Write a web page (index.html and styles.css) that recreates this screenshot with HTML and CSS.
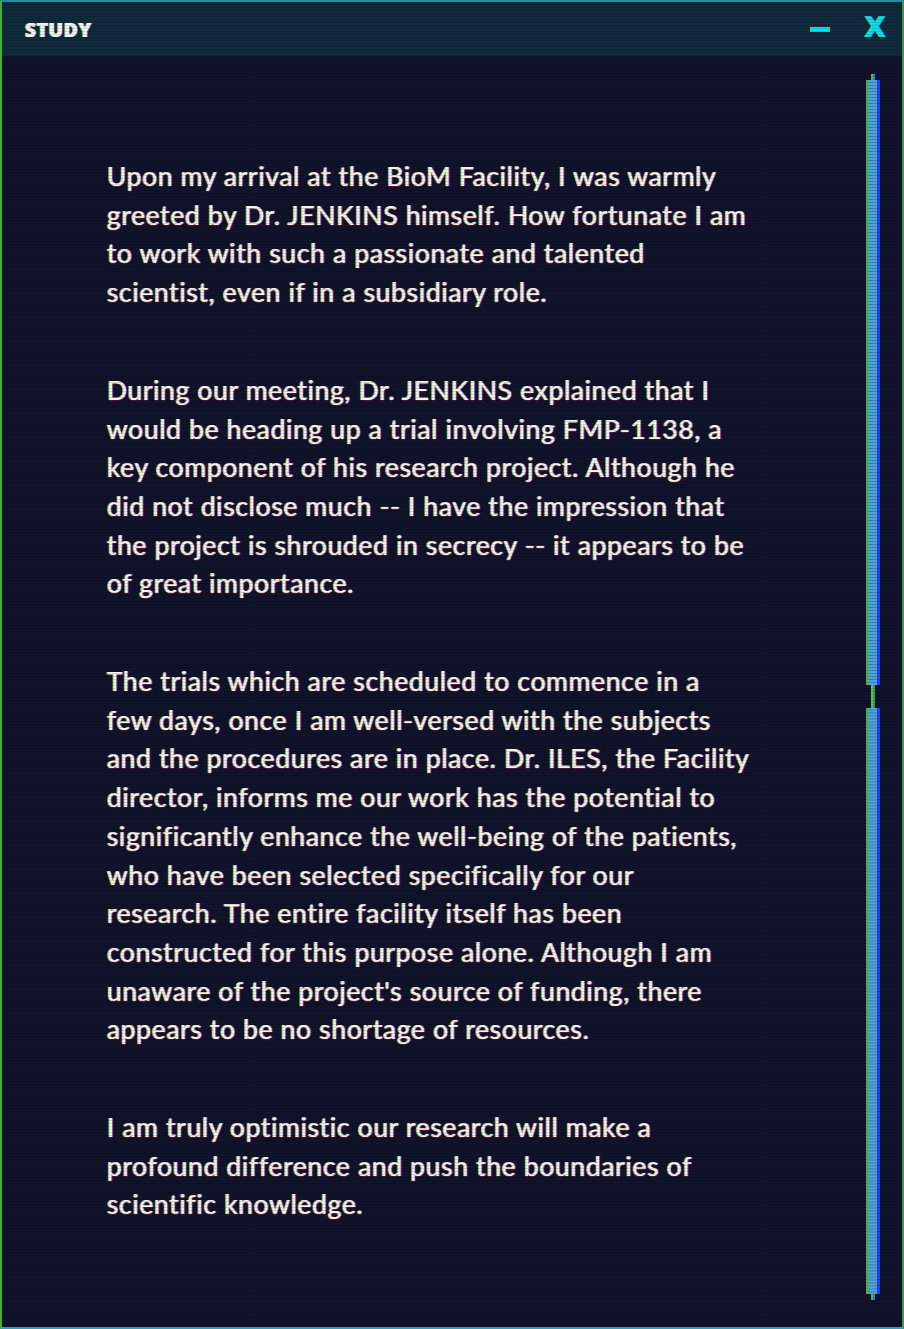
FILE: index.html
```html
<!DOCTYPE html>
<html>
<head>
<meta charset="utf-8">
<link rel="stylesheet" href="styles.css">
</head>
<body>
<div class="window">
  <header class="titlebar">
    <span class="title">STUDY</span>
    <div class="controls">
      <span class="minimize"></span>
      <span class="close">X</span>
    </div>
  </header>
  <div class="body">
    <article class="content">
      <p>Upon my arrival at the BioM Facility, I was warmly<br>greeted by Dr. JENKINS himself. How fortunate I am<br>to work with such a passionate and talented<br>scientist, even if in a subsidiary role.</p>
      <p>During our meeting, Dr. JENKINS explained that I<br>would be heading up a trial involving FMP-1138, a<br>key component of his research project. Although he<br>did not disclose much -- I have the impression that<br>the project is shrouded in secrecy -- it appears to be<br>of great importance.</p>
      <p>The trials which are scheduled to commence in a<br>few days, once I am well-versed with the subjects<br>and the procedures are in place. Dr. ILES, the Facility<br>director, informs me our work has the potential to<br>significantly enhance the well-being of the patients,<br>who have been selected specifically for our<br>research. The entire facility itself has been<br>constructed for this purpose alone. Although I am<br>unaware of the project's source of funding, there<br>appears to be no shortage of resources.</p>
      <p>I am truly optimistic our research will make a<br>profound difference and push the boundaries of<br>scientific knowledge.</p>
    </article>
    <div class="scrollbar">
      <span class="cap"></span>
      <span class="seg seg-top"></span>
      <span class="link"></span>
      <span class="seg seg-bottom"></span>
      <span class="cap"></span>
    </div>
  </div>
  <div class="scanlines"></div>
</div>
</body>
</html>
```
FILE: styles.css
```css
html, body {
  margin: 0;
  padding: 0;
  background: #0f1326;
}
.window {
  position: relative;
  width: 904px;
  height: 1329px;
  box-sizing: border-box;
  border-top: 2px solid #1f8fa6;
  border-left: 2px solid #3fae3a;
  border-right: 2px solid #3a9a4a;
  border-bottom: 2px solid #2f9fc0;
  background: #10132a;
  display: flex;
  flex-direction: column;
  overflow: hidden;
  font-family: "Lato", "Open Sans", sans-serif;
}
.titlebar {
  height: 54px;
  flex: none;
  background: #0f2a3b;
  display: flex;
  align-items: center;
  justify-content: space-between;
  padding: 0 16px 0 23px;
}
.title {
  color: #f4f6ea;
  font-family: "Open Sans", sans-serif;
  font-weight: 800;
  font-size: 19.5px;
  letter-spacing: 0.4px;
  text-shadow: -1px 0 rgba(240, 230, 40, 0.8), 1px 0 rgba(70, 90, 255, 0.9);
  margin-top: 1px;
}
.controls {
  display: flex;
  align-items: center;
  gap: 34px;
}
.minimize {
  width: 19px;
  height: 5px;
  background: #00e4f4;
  box-shadow: -1px 0 0 #30e070;
}
.close {
  color: #12d8e8;
  font-family: "DejaVu Sans", sans-serif;
  font-size: 28px;
  font-weight: 700;
  line-height: 1;
  text-shadow: -1px 0 #30f070, 1px 0 #1060ff;
  margin-top: -3px;
}
.body {
  flex: 1;
  display: flex;
  justify-content: space-between;
  padding-top: 18px;
  padding-bottom: 27px;
}
.content {
  padding: 83px 0 0 105px;
}
.content p {
  margin: 0 0 59px;
  color: #f5f4ea;
  font-size: 26.5px;
  line-height: 38.7px;
  letter-spacing: 0.65px;
  text-shadow: -1px 0 rgba(235, 225, 40, 0.8), 1px 0 rgba(90, 70, 255, 0.9), 0 1px 1px rgba(220, 40, 80, 0.35);
}
.scrollbar {
  width: 14px;
  margin-right: 22px;
  display: flex;
  flex-direction: column;
  align-items: center;
}
.cap {
  width: 4px;
  height: 6px;
  background: linear-gradient(90deg, #4ec03a 0 50%, #3a70ff 50%);
  flex: none;
}
.seg {
  width: 14px;
  box-sizing: border-box;
  border-left: 2px solid #4eb43e;
  border-right: 3px solid #2540f0;
  background: repeating-linear-gradient(180deg, #4fa6d4 0 2px, #3f94c2 2px 3px);
}
.seg-top {
  height: 605px;
}
.link {
  width: 4px;
  height: 23px;
  flex: none;
  background: linear-gradient(90deg, #5ec83a 0 50%, #3a9a60 50%);
}
.seg-bottom {
  flex: 1;
}
.scanlines {
  position: absolute;
  inset: 0;
  pointer-events: none;
  background: repeating-linear-gradient(180deg, rgba(0, 0, 0, 0) 0 2px, rgba(0, 0, 0, 0.12) 2px 3px);
}
```
